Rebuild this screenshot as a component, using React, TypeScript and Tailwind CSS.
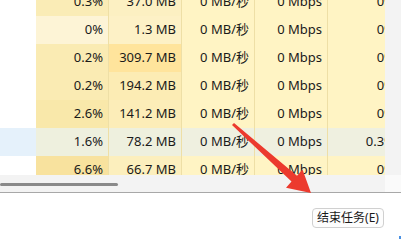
type Row = {
  cpu: string
  mem: string
  gpu: string
  cpuBg: string
  memBg: string
  restBg: string
  leftBg: string
}

const rows: Row[] = [
  { cpu: '0.3%', mem: '37.0 MB', gpu: '0%', cpuBg: 'bg-[#faecb6]', memBg: 'bg-[#fcf0c2]', restBg: 'bg-[#fff4c4]', leftBg: 'bg-white' },
  { cpu: '0%', mem: '1.3 MB', gpu: '0%', cpuBg: 'bg-[#fdf4d6]', memBg: 'bg-[#fdf1c6]', restBg: 'bg-[#fff4c4]', leftBg: 'bg-white' },
  { cpu: '0.2%', mem: '309.7 MB', gpu: '0%', cpuBg: 'bg-[#faebb3]', memBg: 'bg-[#ffe49c]', restBg: 'bg-[#fff4c4]', leftBg: 'bg-white' },
  { cpu: '0.2%', mem: '194.2 MB', gpu: '0%', cpuBg: 'bg-[#faebb3]', memBg: 'bg-[#fcecb4]', restBg: 'bg-[#fff4c4]', leftBg: 'bg-white' },
  { cpu: '2.6%', mem: '141.2 MB', gpu: '0%', cpuBg: 'bg-[#f9e8aa]', memBg: 'bg-[#fcedb8]', restBg: 'bg-[#fff4c4]', leftBg: 'bg-white' },
  { cpu: '1.6%', mem: '78.2 MB', gpu: '0.3%', cpuBg: 'bg-[#eef0de]', memBg: 'bg-[#eef0de]', restBg: 'bg-[#eff0e0]', leftBg: 'bg-[#e5f1fb]' },
  { cpu: '6.6%', mem: '66.7 MB', gpu: '0%', cpuBg: 'bg-[#f8e29e]', memBg: 'bg-[#fcefbd]', restBg: 'bg-[#fff4c4]', leftBg: 'bg-white' },
]

function Cell({ bg, children }: { bg: string; children: React.ReactNode }) {
  return (
    <div className={`${bg} w-[73px] shrink-0 h-full border-r border-[#eedfa6] flex items-center justify-end pr-[5px] whitespace-nowrap`}>
      {children}
    </div>
  )
}

export default function App() {
  return (
    <div
      className="relative w-[401px] h-[241px] overflow-hidden bg-white text-[13px] text-[#1a1a1a]"
      style={{ fontFamily: '"Noto Sans", "Noto Sans CJK SC", sans-serif' }}
    >
      {/* Process table, first row scrolled partly out of view */}
      <div className="flex h-[175px] overflow-hidden">
        <div className="w-[385px] overflow-hidden">
          <div className="-mt-[12px] w-[401px]">
            {rows.map((r, i) => (
              <div key={i} className="flex h-[28px]">
                <div className={`${r.leftBg} w-[36px] shrink-0`} />
                <Cell bg={r.cpuBg}>{r.cpu}</Cell>
                <Cell bg={r.memBg}>{r.mem}</Cell>
                <Cell bg={r.restBg}>0 MB/秒</Cell>
                <Cell bg={r.restBg}>0 Mbps</Cell>
                <div className={`${r.restBg} w-[73px] shrink-0 h-full flex items-center justify-end pr-[6px]`}>{r.gpu}</div>
              </div>
            ))}
          </div>
        </div>
        {/* Vertical scrollbar strip */}
        <div className="w-[16px] bg-[#f3f3f3]" />
      </div>

      {/* Horizontal scrollbar */}
      <div className="flex h-[17px]">
        <div className="w-[385px] bg-[#f3f3f3] flex items-center">
          <div className="w-[118px] h-[3px] rounded-full bg-[#8a8a8a] mt-[1px]" />
        </div>
        <div className="flex-1 bg-[#fafafa]" />
      </div>
      <div className="h-px bg-[#a8a8a8]" />

      {/* Footer */}
      <div className="flex justify-end pt-[15px] pr-[17px]">
        <button className="w-[72px] h-[20px] rounded-[4px] border border-[#d0d0d0] bg-[#fdfdfd] text-[12px] leading-none text-[#1a1a1a] flex items-center justify-center">
          结束任务(E)
        </button>
      </div>

      <div className="absolute right-0 bottom-[2px] w-[2px] h-[3px] bg-[#4a90e2]" />

      {/* Red annotation arrow */}
      <svg className="absolute left-0 top-0 pointer-events-none" width="401" height="241" viewBox="0 0 401 241">
        <polygon
          points="232,125 234,123 297,175.8 302.5,169.5 311,193 286,187.8 291.5,181.4"
          fill="#ec3a2e"
        />
      </svg>
    </div>
  )
}
